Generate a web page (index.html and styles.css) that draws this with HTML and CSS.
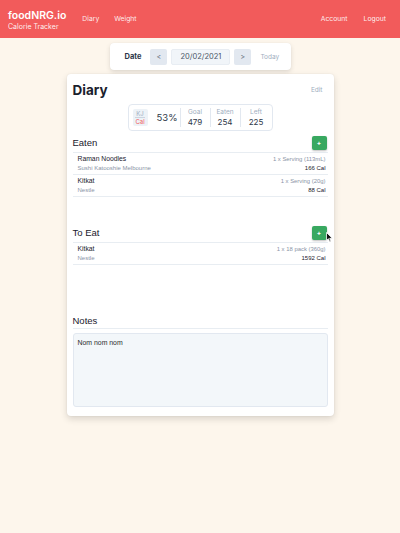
FILE: index.html
```html
<!DOCTYPE html>
<html lang="en">
<head>
<meta charset="utf-8">
<title>foodNRG.io - Diary</title>
<link rel="stylesheet" href="styles.css">
</head>
<body>
<header class="topbar">
  <div class="brand">
    <div class="brand-name">foodNRG.io</div>
    <div class="brand-sub">Calorie Tracker</div>
  </div>
  <nav class="nav-main">
    <a class="nav-link">Diary</a>
    <a class="nav-link">Weight</a>
  </nav>
  <nav class="nav-user">
    <a class="nav-link">Account</a>
    <a class="nav-link">Logout</a>
  </nav>
</header>

<main class="page">
  <div class="datebar">
    <span class="date-label">Date</span>
    <button class="date-btn">&lt;</button>
    <div class="date-input">20/02/2021</div>
    <button class="date-btn">&gt;</button>
    <span class="date-today">Today</span>
  </div>

  <section class="card">
    <div class="card-head">
      <h1 class="title">Diary</h1>
      <span class="edit">Edit</span>
    </div>

    <div class="stats-wrap">
      <div class="stats">
        <div class="unit-cell">
          <div class="unit">
            <span class="unit-kj">KJ</span>
            <span class="unit-cal">Cal</span>
          </div>
          <span class="percent">53%</span>
        </div>
        <div class="stat"><span class="stat-label">Goal</span><span class="stat-value">479</span></div>
        <div class="stat"><span class="stat-label">Eaten</span><span class="stat-value">254</span></div>
        <div class="stat"><span class="stat-label">Left</span><span class="stat-value">225</span></div>
      </div>
    </div>

    <div class="section">
      <div class="section-head">
        <h2 class="section-title">Eaten</h2>
        <button class="add-btn">+</button>
      </div>
      <ul class="list">
        <li class="item">
          <div class="item-row"><span class="item-name">Raman Noodles</span><span class="item-serving">1 x Serving (113mL)</span></div>
          <div class="item-row"><span class="item-brand">Sushi Katooshie Melbourne</span><span class="item-cal">166 Cal</span></div>
        </li>
        <li class="item">
          <div class="item-row"><span class="item-name">Kitkat</span><span class="item-serving">1 x Serving (20g)</span></div>
          <div class="item-row"><span class="item-brand">Nestle</span><span class="item-cal">88 Cal</span></div>
        </li>
      </ul>
    </div>

    <div class="section">
      <div class="section-head">
        <h2 class="section-title">To Eat</h2>
        <button class="add-btn">+
          <svg class="cursor" width="7" height="11" viewBox="0 0 7 11"><path d="M0.5 0.5 L0.5 8.5 L2.4 6.7 L3.8 9.9 L5 9.4 L3.7 6.3 L6.3 6.3 Z" fill="#111" stroke="#fff" stroke-width="0.8" stroke-linejoin="round"/></svg>
        </button>
      </div>
      <ul class="list">
        <li class="item">
          <div class="item-row"><span class="item-name">Kitkat</span><span class="item-serving">1 x 18 pack (360g)</span></div>
          <div class="item-row"><span class="item-brand">Nestle</span><span class="item-cal">1592 Cal</span></div>
        </li>
      </ul>
    </div>

    <div class="notes">
      <div class="section-head notes-head">
        <h2 class="section-title">Notes</h2>
      </div>
      <div class="notes-box">Nom nom nom</div>
    </div>
  </section>
</main>
</body>
</html>
```

FILE: styles.css
```css
* { box-sizing: border-box; }

html, body {
  margin: 0;
  padding: 0;
}

body {
  background: #fdf6ec;
  font-family: Inter, "Noto Sans", "Liberation Sans", sans-serif;
  color: #1a202c;
  height: 533px;
}

.topbar {
  height: 38px;
  background: #f25b5b;
  color: #fff;
  display: flex;
  align-items: center;
  padding: 0 14px 0 8px;
}

.brand {
  display: flex;
  flex-direction: column;
  margin-top: 2px;
}

.brand-name {
  font-size: 10.5px;
  font-weight: 600;
  line-height: 12px;
}

.brand-sub {
  font-size: 7px;
  line-height: 9px;
  color: rgba(255,255,255,0.92);
}

.nav-main {
  display: flex;
  gap: 15px;
  margin-left: 16px;
  margin-top: -1px;
}

.nav-user {
  display: flex;
  gap: 16px;
  margin-left: auto;
  margin-top: -1px;
}

.nav-link {
  font-size: 6.8px;
  color: rgba(255,255,255,0.9);
}

.page {
  display: flex;
  flex-direction: column;
  align-items: center;
  padding-top: 5px;
}

.datebar {
  width: 181px;
  height: 27px;
  background: #fff;
  border-radius: 4px;
  box-shadow: 0 2px 5px rgba(0,0,0,0.12), 0 0 1px rgba(0,0,0,0.08);
  display: flex;
  align-items: center;
  padding: 0 0 0 15px;
}

.date-label {
  font-size: 7.5px;
  font-weight: 700;
  color: #2d3748;
}

.date-btn {
  width: 17px;
  height: 16px;
  border: none;
  border-radius: 2px;
  background: #e2e8f0;
  color: #4a5568;
  font-family: inherit;
  font-size: 7px;
  padding: 0;
  margin-left: 9px;
}

.date-input {
  width: 59px;
  height: 16px;
  margin-left: 4px;
  background: #f1f5f9;
  border: 1px solid #e8edf3;
  border-radius: 2px;
  font-size: 7.5px;
  color: #4a5568;
  display: flex;
  align-items: center;
  justify-content: center;
}

.date-input + .date-btn {
  margin-left: 4px;
}

.date-today {
  font-size: 6.5px;
  color: #a0aec0;
  margin-left: 9px;
}

.card {
  margin-top: 4px;
  width: 267px;
  background: #fff;
  border-radius: 4px;
  box-shadow: 0 3px 7px rgba(0,0,0,0.14), 0 0 2px rgba(0,0,0,0.07);
  padding: 6px 6px 9px 6px;
}

.card-head {
  display: flex;
  align-items: center;
  justify-content: space-between;
  height: 20px;
}

.title {
  margin: 0;
  font-size: 13.5px;
  line-height: 20px;
  font-weight: 700;
  color: #1a202c;
}

.edit {
  font-size: 6.5px;
  color: #a0aec0;
  margin-right: 5px;
}

.stats-wrap {
  display: flex;
  justify-content: center;
  margin-top: 4px;
}

.stats {
  width: 145px;
  height: 27px;
  border: 1px solid #e2e8f0;
  border-radius: 4px;
  display: flex;
  align-items: stretch;
}

.unit-cell {
  display: flex;
  align-items: center;
  width: 52px;
  padding-left: 4px;
  border-right: 1px solid #e2e8f0;
  margin: 3px 0;
}

.unit {
  width: 15px;
  height: 17px;
  background: #edf2f7;
  border-radius: 2px;
  display: flex;
  flex-direction: column;
  align-items: center;
  justify-content: center;
  font-size: 6px;
  line-height: 7px;
}

.unit-kj {
  color: #a0aec0;
  border-bottom: 1px solid #cbd5e0;
  padding: 0 1px;
}

.unit-cal {
  color: #f25b5b;
}

.percent {
  font-size: 9.5px;
  color: #2d3748;
  margin-left: 9px;
}

.stat {
  width: 30px;
  display: flex;
  flex-direction: column;
  align-items: center;
  justify-content: center;
  border-right: 1px solid #e2e8f0;
  margin: 3px 0;
}

.stat:last-child {
  border-right: none;
  flex: 1;
}

.stat-label {
  font-size: 6.5px;
  color: #a0aec0;
  line-height: 9px;
}

.stat-value {
  font-size: 8px;
  color: #2d3748;
  line-height: 11px;
}

.section {
  margin-top: 2px;
}

.section-head {
  display: flex;
  align-items: center;
  justify-content: space-between;
  height: 20px;
  border-bottom: 1px solid #e8edf2;
}

.section-title {
  margin: 0;
  font-family: "Liberation Sans", Arial, sans-serif;
  font-size: 9.5px;
  font-weight: 400;
  color: #1a202c;
}

.add-btn {
  position: relative;
  width: 15px;
  height: 14px;
  border: none;
  border-radius: 2px;
  background: #38a860;
  color: #fff;
  font-size: 6.5px;
  font-weight: 700;
  font-family: inherit;
  line-height: 14px;
  padding: 0;
  margin-right: 1px;
  box-shadow: 0 1px 2px rgba(0,0,0,0.25);
}

.cursor {
  position: absolute;
  left: 14px;
  top: 6px;
}

.list {
  list-style: none;
  margin: 0;
  padding: 0;
  min-height: 68px;
}

.item {
  padding: 0 2px 0 5px;
  border-bottom: 1px solid #e8edf2;
  height: 22px;
  display: flex;
  flex-direction: column;
  justify-content: center;
  font-family: "Liberation Sans", Arial, sans-serif;
}

.item-row {
  display: flex;
  justify-content: space-between;
  align-items: baseline;
  line-height: 9px;
}

.item-name {
  font-size: 6.8px;
  color: #1a202c;
}

.item-serving {
  font-size: 5.9px;
  color: #8a94a6;
}

.item-brand {
  font-size: 6px;
  color: #8a94a6;
}

.item-cal {
  font-size: 6px;
  color: #1a202c;
}

.notes {
  margin-top: 2px;
}

.notes-head {
  height: 16px;
}

.notes-box {
  margin-top: 4px;
  height: 74px;
  background: #f3f7fa;
  border: 1px solid #e2e8f0;
  border-radius: 3px;
  padding: 5px 4px;
  font-family: "Liberation Sans", Arial, sans-serif;
  font-size: 6.9px;
  color: #2b2b2b;
}
```
